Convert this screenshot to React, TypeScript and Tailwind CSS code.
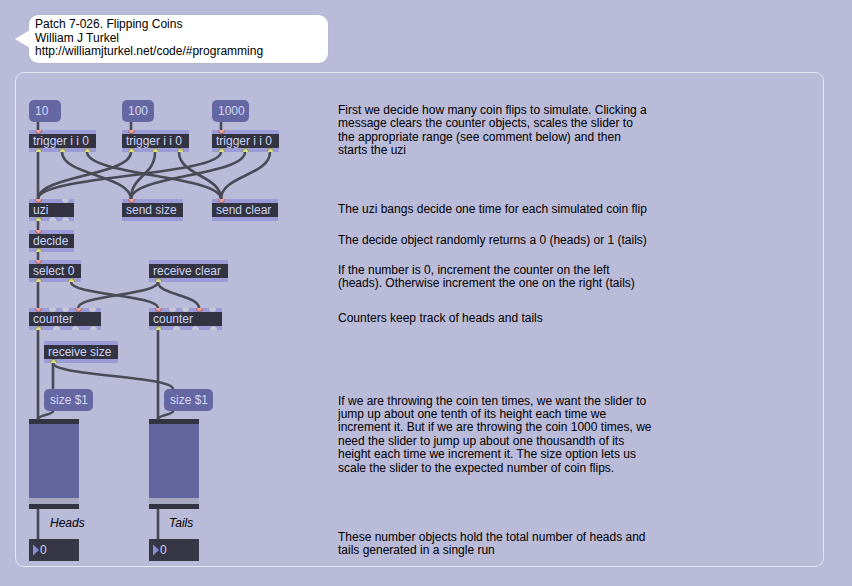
import React from 'react'

// Max patch "Flipping Coins" — objects sit on a free canvas, cords drawn in one svg

type Dot = { x: number; on?: boolean }

type Obj = {
  x: number
  y: number
  w: number
  text: string
  ins?: Dot[]
  outs?: Dot[]
}

const FONT = { fontFamily: '"Liberation Sans", Arial, sans-serif' }

const objects: Obj[] = [
  { x: 29, y: 130, w: 67, text: 'trigger i i 0', ins: [{ x: 9, on: true }], outs: [{ x: 9, on: true }, { x: 33, on: true }, { x: 58, on: true }] },
  { x: 122, y: 130, w: 67, text: 'trigger i i 0', ins: [{ x: 9, on: true }], outs: [{ x: 9, on: true }, { x: 33, on: true }, { x: 58, on: true }] },
  { x: 212, y: 130, w: 67, text: 'trigger i i 0', ins: [{ x: 9, on: true }], outs: [{ x: 9, on: true }, { x: 33, on: true }, { x: 58, on: true }] },
  { x: 29, y: 199, w: 45, text: 'uzi', ins: [{ x: 9, on: true }, { x: 36 }], outs: [{ x: 9, on: true }, { x: 23 }, { x: 36 }] },
  { x: 122, y: 199, w: 61, text: 'send size', ins: [{ x: 9, on: true }] },
  { x: 212, y: 199, w: 66, text: 'send clear', ins: [{ x: 9, on: true }] },
  { x: 29, y: 230, w: 45, text: 'decide', ins: [{ x: 9, on: true }], outs: [{ x: 9, on: true }] },
  { x: 29, y: 260, w: 52, text: 'select 0', ins: [{ x: 9, on: true }], outs: [{ x: 9, on: true }, { x: 42, on: true }] },
  { x: 149, y: 260, w: 79, text: 'receive clear', outs: [{ x: 9, on: true }] },
  { x: 29, y: 308, w: 72, text: 'counter', ins: [{ x: 9, on: true }, { x: 23 }, { x: 36 }, { x: 49, on: true }, { x: 63 }], outs: [{ x: 9, on: true }, { x: 27 }, { x: 46 }, { x: 64 }] },
  { x: 149, y: 308, w: 73, text: 'counter', ins: [{ x: 9, on: true }, { x: 23 }, { x: 36 }, { x: 50, on: true }, { x: 63 }], outs: [{ x: 9, on: true }, { x: 27 }, { x: 46 }, { x: 64 }] },
  { x: 44, y: 341, w: 74, text: 'receive size', outs: [{ x: 9, on: true }] },
]

const messages = [
  { x: 29, y: 100, w: 32, text: '10' },
  { x: 122, y: 100, w: 32, text: '100' },
  { x: 212, y: 100, w: 37, text: '1000' },
  { x: 44, y: 389, w: 49, text: 'size $1' },
  { x: 164, y: 389, w: 49, text: 'size $1' },
]

// [x1, y1, x2, y2] outlet -> inlet
const cords: number[][] = [
  [38, 122, 38, 130], [131, 122, 131, 130], [221, 122, 221, 130],
  [38, 152, 38, 199], [62, 152, 131, 199], [87, 152, 221, 199],
  [131, 152, 38, 199], [155, 152, 131, 199], [179, 152, 221, 199],
  [221, 152, 38, 199], [245, 152, 131, 199], [270, 152, 221, 199],
  [38, 221, 38, 230], [38, 252, 38, 260],
  [38, 282, 38, 308], [71, 282, 158, 308],
  [158, 282, 78, 308], [158, 282, 199, 308],
  [38, 330, 38, 419], [158, 330, 158, 419],
  [53, 363, 53, 389], [53, 363, 173, 389],
  [53, 411, 38, 419], [173, 411, 158, 419],
  [38, 509, 38, 539], [158, 509, 158, 539],
]

const comments = [
  {
    y: 104,
    lines: [
      'First we decide how many coin flips to simulate. Clicking a',
      'message clears the counter objects, scales the slider to',
      'the appropriate range (see comment below) and then',
      'starts the uzi',
    ],
  },
  { y: 203, lines: ['The uzi bangs decide one time for each simulated coin flip'] },
  { y: 234, lines: ['The decide object randomly returns a 0 (heads) or 1 (tails)'] },
  {
    y: 264,
    lines: [
      'If the number is 0, increment the counter on the left',
      '(heads). Otherwise increment the one on the right (tails)',
    ],
  },
  { y: 312, lines: ['Counters keep track of heads and tails'] },
  {
    y: 394.5,
    lines: [
      'If we are throwing the coin ten times, we want the slider to',
      'jump up about one tenth of its height each time we',
      'increment it. But if we are throwing the coin 1000 times, we',
      'need the slider to jump up about one thousandth of its',
      'height each time we increment it. The size option lets us',
      'scale the slider to the expected number of coin flips.',
    ],
  },
  {
    y: 531,
    lines: [
      'These number objects hold the total number of heads and',
      'tails generated in a single run',
    ],
  },
]

function cordPath([x1, y1, x2, y2]: number[]) {
  const d = Math.max(4, (y2 - y1) * 0.5)
  return `M${x1} ${y1} C${x1} ${y1 + d} ${x2} ${y2 - d} ${x2} ${y2}`
}

function Port({ x, on, out }: Dot & { out?: boolean }) {
  const color = on
    ? out
      ? 'bg-[#d9dc8c] border-[#8c8f4c]'
      : 'bg-[#eaa4a0] border-[#a8605c]'
    : 'bg-[#c9c9d6] border-[#c9c9d6]'
  return (
    <span
      className={`absolute w-[7px] h-[7px] rounded-full border ${color} ${out ? 'bottom-[-3px]' : 'top-[-3px]'}`}
      style={{ left: x - 3.5 }}
    />
  )
}

function ObjectBox({ x, y, w, text, ins = [], outs = [] }: Obj) {
  return (
    <div className="absolute h-[22px] bg-[#9b9bd8] overflow-hidden" style={{ left: x, top: y, width: w }}>
      <div className="absolute left-0 right-0 top-[4px] h-[14px] bg-[#333341]" />
      <span className="absolute left-[4px] top-[4px] text-[12px] leading-[14px] text-[#cdd5f5] whitespace-nowrap">
        {text}
      </span>
      {ins.map((p, i) => <Port key={'i' + i} {...p} />)}
      {outs.map((p, i) => <Port key={'o' + i} {...p} out />)}
    </div>
  )
}

function Slider({ x }: { x: number }) {
  return (
    <div className="absolute top-[419px] w-[50px] h-[90px] flex flex-col" style={{ left: x }}>
      <div className="h-[5px] bg-[#333341]" />
      <div className="flex-1 bg-[#64659f]" />
      <div className="h-[6px] bg-[#a7a7bf]" />
      <div className="h-[5px] bg-[#333341]" />
    </div>
  )
}

function NumberBox({ x }: { x: number }) {
  return (
    <div className="absolute top-[539px] w-[50px] h-[22px] bg-[#363645] flex items-center" style={{ left: x }}>
      <svg width="10" height="12" viewBox="0 0 10 12" className="ml-[3px]">
        <polygon points="1,0.5 7,6 1,11.5" fill="#8b8bd6" />
      </svg>
      <span className="text-[12px] leading-[14px] text-[#cdd5f5] -ml-[2px]">0</span>
    </div>
  )
}

export default function App() {
  return (
    <div className="relative w-[852px] h-[586px] bg-[#babbd9] overflow-hidden" style={FONT}>
      {/* title bubble */}
      <svg className="absolute left-[13px] top-[28px]" width="20" height="22" viewBox="0 0 20 22">
        <polygon points="2,11 17,2 17,20" fill="#ffffff" />
      </svg>
      <div className="absolute left-[29px] top-[15px] w-[299px] h-[48px] bg-white rounded-[9px] shadow-[0_0_1px_rgba(0,0,0,0.25)] pl-[6px] pt-[3px] text-[12px] leading-[13.5px] text-black">
        <div>Patch 7-026. Flipping Coins</div>
        <div>William J Turkel</div>
        <div>http://williamjturkel.net/code/#programming</div>
      </div>

      {/* patcher panel */}
      <div className="absolute left-[15px] top-[72px] w-[809px] h-[495px] border-[1.5px] border-[#e6e6f0] rounded-[9px]" />

      {/* cords */}
      <svg className="absolute left-0 top-0" width="852" height="586">
        {cords.map((c, i) => (
          <path key={i} d={cordPath(c)} fill="none" stroke="#4a4a57" strokeWidth="2.6" strokeLinecap="round" />
        ))}
      </svg>

      {messages.map((m, i) => (
        <div
          key={i}
          className="absolute h-[22px] rounded-[5px] bg-[#6567a3] pl-[6px] text-[12px] leading-[22px] text-[#d4d9f5] whitespace-nowrap"
          style={{ left: m.x, top: m.y, width: m.w }}
        >
          {m.text}
        </div>
      ))}

      {objects.map((o, i) => <ObjectBox key={i} {...o} />)}

      <Slider x={29} />
      <Slider x={149} />

      <div className="absolute left-[50px] top-[516px] text-[12px] leading-[14px] italic text-black">Heads</div>
      <div className="absolute left-[169px] top-[516px] text-[12px] leading-[14px] italic text-black">Tails</div>

      <NumberBox x={29} />
      <NumberBox x={149} />

      {comments.map((c, i) => (
        <div key={i} className="absolute left-[338px] text-[12px] leading-[13.4px] text-black whitespace-nowrap" style={{ top: c.y }}>
          {c.lines.map((l, j) => <div key={j}>{l}</div>)}
        </div>
      ))}
    </div>
  )
}
